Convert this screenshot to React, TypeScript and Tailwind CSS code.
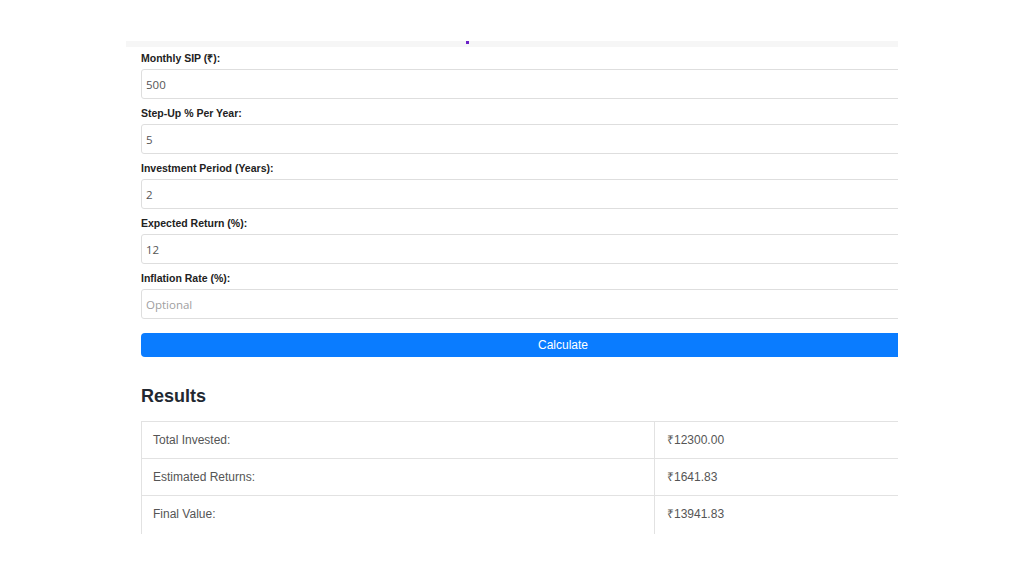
import React from "react";

const fields = [
  { label: "Monthly SIP (₹):", value: "500" },
  { label: "Step-Up % Per Year:", value: "5" },
  { label: "Investment Period (Years):", value: "2" },
  { label: "Expected Return (%):", value: "12" },
  { label: "Inflation Rate (%):", value: "", placeholder: "Optional" },
];

const results = [
  { label: "Total Invested:", value: "₹12300.00" },
  { label: "Estimated Returns:", value: "₹1641.83" },
  { label: "Final Value:", value: "₹13941.83" },
];

const App: React.FC = () => {
  return (
    <div className="w-[1024px] h-[576px] bg-white overflow-hidden">
      <div className="ml-[126px] mt-[41px] w-[772px] h-[493px] overflow-hidden">
        {/* top strip */}
        <div className="relative h-[6px] bg-[#f6f6f6]">
          <div className="absolute left-[340px] top-0 w-[3px] h-[3px] bg-[#6b21c8]" />
        </div>

        <div className="pl-[15px] pt-[4px] w-[859px] font-['Liberation_Sans',Arial,sans-serif]">
          {fields.map((f) => (
            <div key={f.label} className="mb-[7px]">
              <label className="block h-[14px] leading-[14px] text-[10.5px] font-bold text-[#222]">
                {f.label}
              </label>
              <input
                readOnly
                value={f.value}
                placeholder={f.placeholder}
                className="mt-[4px] block w-[844px] h-[30px] px-[4px] border border-[#dedede] rounded-[3px] bg-white text-[11.5px] text-[#555] placeholder:text-[#a0a0a0] outline-none font-['Open_Sans',sans-serif]"
              />
            </div>
          ))}

          <button className="mt-[14px] block w-[844px] h-[24px] rounded-[4px] bg-[#0a7cff] text-white text-[12px] leading-[24px] text-center">
            Calculate
          </button>

          <h2 className="mt-[28px] h-[22px] leading-[22px] text-[18px] font-bold text-[#222831]">
            Results
          </h2>

          <table className="mt-[14px] w-[844px] border-collapse text-[12px] text-[#555]">
            <tbody>
              {results.map((r, i) => (
                <tr
                  key={r.label}
                  className={i === results.length - 1 ? "h-[37px] align-top" : "h-[37px]"}
                >
                  <td className="w-[513px] border border-[#e2e2e2] px-[11px]">
                    {i === results.length - 1 ? (
                      <div className="h-[44px] pt-[9px]">{r.label}</div>
                    ) : (
                      r.label
                    )}
                  </td>
                  <td className="border border-[#e2e2e2] px-[12px]">
                    {i === results.length - 1 ? (
                      <div className="h-[44px] pt-[9px]">{r.value}</div>
                    ) : (
                      r.value
                    )}
                  </td>
                </tr>
              ))}
            </tbody>
          </table>
        </div>
      </div>
    </div>
  );
};

export default App;
